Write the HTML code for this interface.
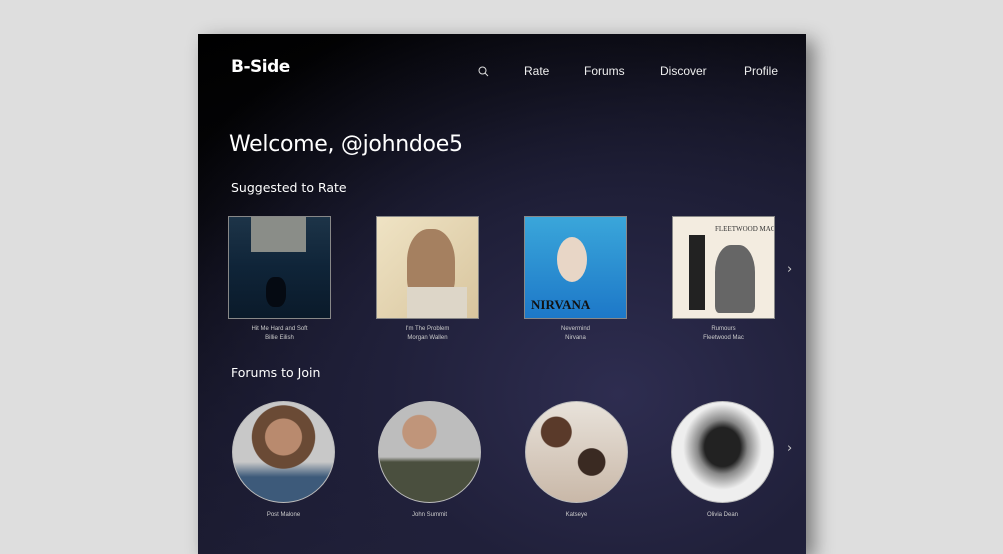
<!DOCTYPE html>
<html><head><meta charset="utf-8"><style>
*{margin:0;padding:0;box-sizing:border-box}
html,body{width:1003px;height:539px;overflow:hidden;background:#dedede;font-family:"DejaVu Sans","Liberation Sans",sans-serif;color:#fff}
.panel{position:absolute;left:198px;top:34px;width:608px;height:520px;
background:radial-gradient(ellipse 520px 420px at 420px 360px,#2e2d50 0%,#20203a 45%,rgba(20,20,34,0) 100%),linear-gradient(160deg,#000 0%,#050508 25%,#161628 55%,#252540 100%);
box-shadow:8px 6px 18px rgba(0,0,0,.45)}
.a{position:absolute;white-space:nowrap}
.logo{left:33px;top:23px;font-size:17px;font-weight:bold;letter-spacing:-0.5px}
.nav{top:30px;font-size:12px;color:#eee;font-family:"Liberation Sans",sans-serif}
h1{position:absolute;left:31px;top:98px;font-size:22px;font-weight:normal;white-space:nowrap;letter-spacing:-0.3px}
.h2{font-size:12.5px;left:33px}
.cov{position:absolute;top:182px;width:103px;height:103px;border:1px solid #888;overflow:hidden}
.cap{position:absolute;top:291px;width:103px;text-align:center;font-size:6px;line-height:9px;color:#ccc;font-family:"Liberation Sans",sans-serif}
.circ{position:absolute;top:367px;width:103px;height:102px;border-radius:50%;border:1px solid #bbb;overflow:hidden}
.nm{position:absolute;top:478px;width:103px;text-align:center;font-size:6px;color:#ccc;font-family:"Liberation Sans",sans-serif}
.chev{position:absolute;left:589px;font-size:13px;color:#ccc}
</style></head><body>
<div class="panel">
<div class="a logo">B-Side</div>
<svg class="a" style="left:280px;top:32px" width="11" height="11" viewBox="0 0 11 11"><circle cx="4.5" cy="4.5" r="3.5" stroke="#ddd" fill="none" stroke-width="1"/><path d="M7 7l3 3" stroke="#ddd" stroke-width="1"/></svg>
<div class="a nav" style="left:326px">Rate</div>
<div class="a nav" style="left:386px">Forums</div>
<div class="a nav" style="left:462px">Discover</div>
<div class="a nav" style="left:546px">Profile</div>
<h1>Welcome, @johndoe5</h1>
<div class="a h2" style="top:146px">Suggested to Rate</div>

<div class="cov" style="left:30px;background:linear-gradient(180deg,#1d3448 0%,#0f2438 50%,#0a1a2a 100%)"><div style="position:absolute;left:22px;top:0;width:55px;height:35px;background:#8a8d88"></div><div style="position:absolute;left:37px;top:60px;width:20px;height:30px;background:#050a12;border-radius:40%"></div></div>
<div class="cov" style="left:178px;background:linear-gradient(135deg,#efe3c4,#d8c59e)"><div style="position:absolute;left:30px;top:12px;width:48px;height:72px;background:#a58060;border-radius:45% 45% 30% 30%"></div><div style="position:absolute;left:30px;top:70px;width:60px;height:33px;background:#ddd6c8"></div></div>
<div class="cov" style="left:326px;background:linear-gradient(180deg,#3aa6da,#1d78c8)"><div style="position:absolute;left:32px;top:20px;width:30px;height:45px;background:#e8d6c6;border-radius:50%"></div><div class="a" style="left:6px;top:80px;font-family:'Liberation Serif',serif;font-weight:bold;font-size:13px;color:#111">NIRVANA</div></div>
<div class="cov" style="left:474px;background:#f3ece0"><div style="position:absolute;left:16px;top:18px;width:16px;height:75px;background:#222"></div><div style="position:absolute;left:42px;top:28px;width:40px;height:68px;background:#666;border-radius:40% 40% 10% 10%"></div><div class="a" style="left:42px;top:8px;font-family:'Liberation Serif',serif;font-size:7px;color:#333">FLEETWOOD MAC</div></div>
<div class="cap" style="left:30px">Hit Me Hard and Soft<br>Billie Eilish</div>
<div class="cap" style="left:178px">I'm The Problem<br>Morgan Wallen</div>
<div class="cap" style="left:326px">Nevermind<br>Nirvana</div>
<div class="cap" style="left:474px">Rumours<br>Fleetwood Mac</div>
<div class="chev" style="top:228px">›</div>

<div class="a h2" style="top:331px">Forums to Join</div>
<div class="circ" style="left:34px;background:radial-gradient(circle at 50% 35%,#b98a6e 0 22%,#6a4a35 23% 38%,transparent 39%),linear-gradient(180deg,#c8c8c8 0 60%,#3d5a7a 75%)"></div>
<div class="circ" style="left:180px;background:radial-gradient(circle at 40% 30%,#c0957a 0 18%,transparent 19%),linear-gradient(180deg,#bdbdbd 0 55%,#4a4f3e 60%)"></div>
<div class="circ" style="left:327px;background:radial-gradient(circle at 30% 30%,#5a3a2a 0 15%,transparent 16%),radial-gradient(circle at 65% 60%,#3a2a22 0 15%,transparent 16%),linear-gradient(180deg,#e8e2da,#c9b8a8)"></div>
<div class="circ" style="left:473px;background:radial-gradient(ellipse at 50% 45%,#222 0 25%,#888 35%,#eee 55%)"></div>
<div class="nm" style="left:34px">Post Malone</div>
<div class="nm" style="left:180px">John Summit</div>
<div class="nm" style="left:327px">Katseye</div>
<div class="nm" style="left:473px">Olivia Dean</div>
<div class="chev" style="top:407px">›</div>
</div>
</body></html>
